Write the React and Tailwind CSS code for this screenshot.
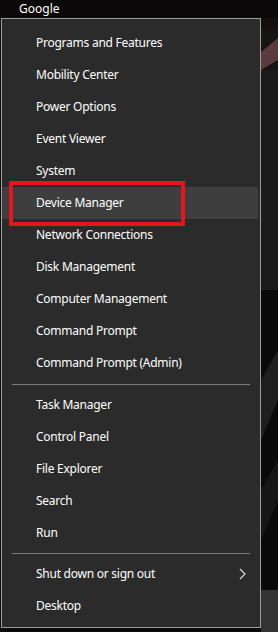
import React from 'react'

const groupA = [
  'Programs and Features',
  'Mobility Center',
  'Power Options',
  'Event Viewer',
  'System',
  'Device Manager',
  'Network Connections',
  'Disk Management',
  'Computer Management',
  'Command Prompt',
  'Command Prompt (Admin)',
]

const groupB = ['Task Manager', 'Control Panel', 'File Explorer', 'Search', 'Run']

const Row = ({ label, active, arrow }) => (
  <div
    className={
      'h-8 mr-[2px] pl-[34px] pr-[12px] flex items-center justify-between text-[12px] tracking-[-0.25px] text-white ' +
      (active ? 'bg-[#3e3e3e]' : '')
    }
  >
    <span>{label}</span>
    {arrow ? (
      <svg width="7" height="12" viewBox="0 0 7 12" fill="none">
        <path d="M1 1l5 5-5 5" stroke="#d8d8d8" strokeWidth="1.2" />
      </svg>
    ) : (
      ''
    )}
  </div>
)

const App = () => {
  return (
    <div
      className="w-[278px] h-[632px] bg-[#0b0b0b] flex flex-col overflow-hidden"
      style={{ fontFamily: '"Noto Sans", "Open Sans", sans-serif' }}
    >
      <div className="h-[18px] flex items-center pl-[19px] text-[12px] text-white bg-[#0a0808]">
        Google
      </div>
      <div className="flex flex-1">
        <div className="w-px bg-[#111]" />
        <div className="relative w-[260px] h-[610px] bg-[#2b2b2b] border border-[#9c9c9c] pt-[8px]">
          {groupA.map((el) => (
            <Row key={el} label={el} active={el === 'Device Manager'} />
          ))}
          <div className="mt-[5px] mb-[4px] mx-[10px] h-px bg-[#7a7a7a]" />
          {groupB.map((el) => (
            <Row key={el} label={el} />
          ))}
          <div className="mt-[4px] mb-[4px] mx-[10px] h-px bg-[#7a7a7a]" />
          <Row label="Shut down or sign out" arrow />
          <Row label="Desktop" />
          <div className="absolute left-[7px] top-[162px] w-[176px] h-[45px] border-[4px] border-[#e3151f]" />
        </div>
        <div className="flex-1 flex flex-col">
          <div className="h-[12px] bg-[#141010]" />
          <svg width="17" height="40" viewBox="0 0 17 40" className="bg-[#171414]">
            <path d="M0 22L17 8V30L0 40Z" fill="#5a3a3c" />
          </svg>
          <div className="h-[220px] bg-[#1b1b1b]" />
          <div className="flex-1 bg-[#0a0a0a]">
            <svg width="17" height="280" viewBox="0 0 17 280">
              <path d="M0 90L17 60V110L0 150Z" fill="#1e1e1e" />
              <path d="M0 200L17 170V210L0 250Z" fill="#161616" />
            </svg>
          </div>
          <div className="h-[42px] bg-[#333333]" />
        </div>
      </div>
    </div>
  )
}

export default App
